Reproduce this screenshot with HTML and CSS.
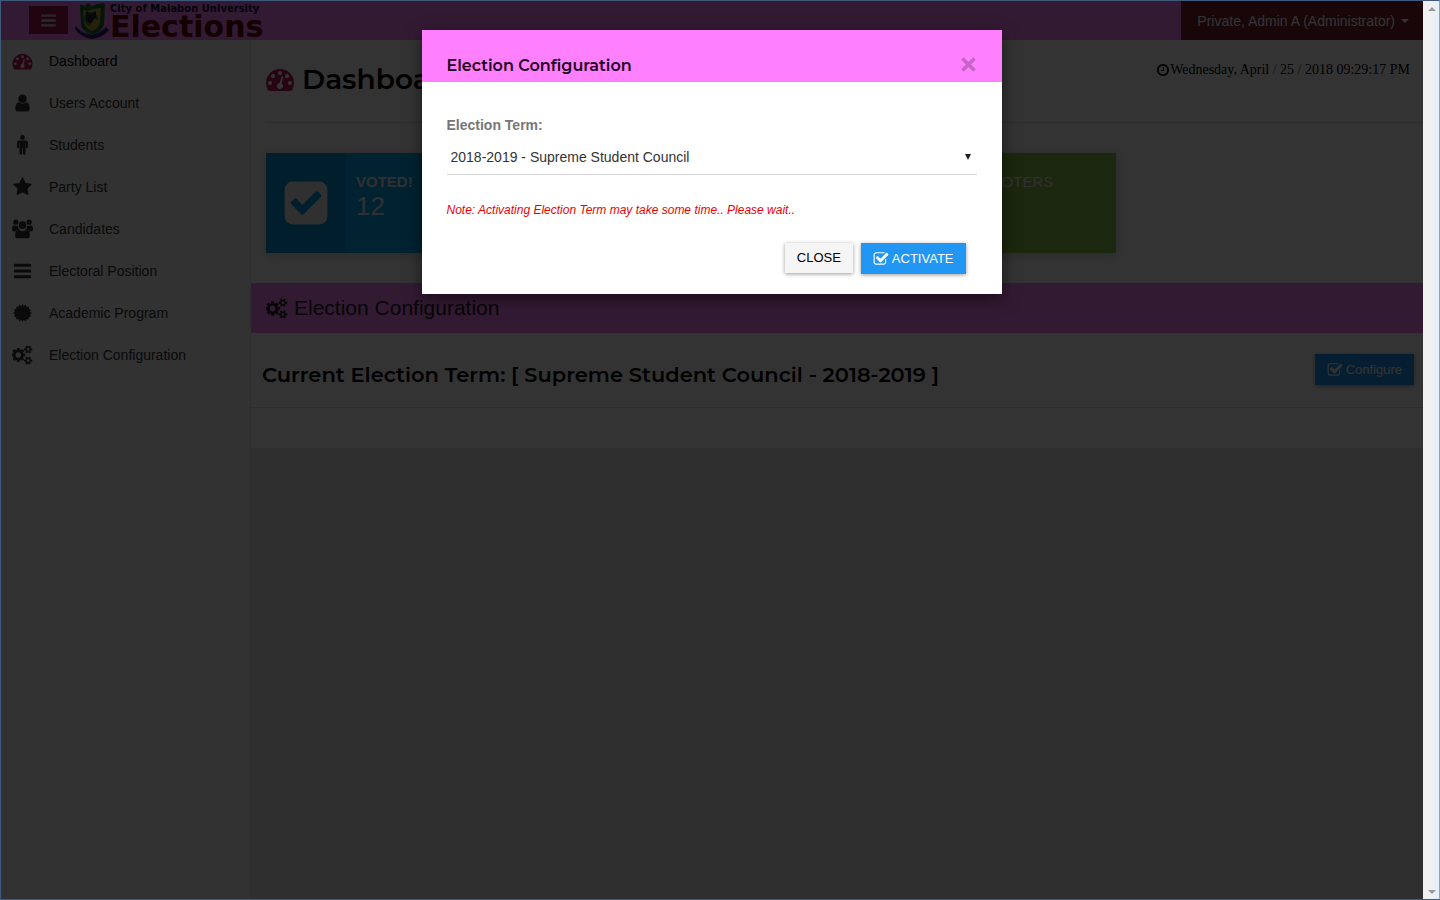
FILE: index.html
```html
<!DOCTYPE html>
<html lang="en">
<head>
<meta charset="utf-8">
<title>Elections - Dashboard</title>
<link rel="stylesheet" href="styles.css">
</head>
<body>
<svg class="sprite" aria-hidden="true">
  <symbol id="i-dash" viewBox="0 0 1792 1792"><path d="M384 1152q0-53-37.500-90.500t-90.500-37.500-90.500 37.500-37.500 90.500 37.500 90.500 90.500 37.500 90.500-37.500 37.500-90.500zm192-448q0-53-37.500-90.500t-90.500-37.500-90.500 37.500-37.500 90.500 37.500 90.500 90.500 37.500 90.500-37.500 37.500-90.500zm428 481l101-382q6-26-7.500-48.500t-38.500-29.500-48 6.500-30 39.500l-101 382q-60 5-107 43.500t-63 98.500q-20 77 20 146t117 89 146-20 89-117q16-60-6-117t-72-91zm660-33q0-53-37.500-90.500t-90.500-37.500-90.500 37.500-37.500 90.500 37.500 90.500 90.500 37.500 90.500-37.500 37.500-90.500zm-640-640q0-53-37.500-90.500t-90.500-37.500-90.500 37.500-37.500 90.500 37.500 90.500 90.500 37.500 90.500-37.500 37.500-90.500zm448 192q0-53-37.500-90.500t-90.500-37.500-90.500 37.500-37.500 90.500 37.500 90.500 90.500 37.500 90.500-37.500 37.500-90.500zm320 448q0 261-141 483-19 29-54 29h-1402q-35 0-54-29-141-221-141-483 0-182 71-348t191-286 286-191 348-71 348 71 286 191 191 286 71 348z"/></symbol>
  <symbol id="i-user" viewBox="0 0 1792 1792"><path d="M1536 1399q0 109-62.500 187t-150.500 78h-854q-88 0-150.500-78t-62.500-187q0-85 8.500-160.500t31.500-152 58.500-131 94-89 134.500-34.500q131 128 313 128t313-128q76 0 134.500 34.500t94 89 58.500 131 31.500 152 8.500 160.500zm-256-887q0 159-112.500 271.500t-271.500 112.500-271.500-112.500-112.500-271.500 112.500-271.500 271.500-112.500 271.500 112.500 112.500 271.500z"/></symbol>
  <symbol id="i-male" viewBox="0 0 20 20"><circle cx="10" cy="2.500" r="2.400"/><path d="M7 5.500h6q2.500 0 2.500 2.500v4.300q0 1-1 1t-1-1V8.500H13V18.500q0 1.300-1.300 1.300t-1.300-1.300V13h-.8v5.500q0 1.300-1.300 1.300T7 18.500V8.500h-.5v3.800q0 1-1 1t-1-1V8q0-2.500 2.500-2.500z"/></symbol>
  <symbol id="i-star" viewBox="0 0 1792 1792"><path d="M1728 647q0 22-26 48l-363 354 86 500q1 7 1 20 0 21-10.500 35.500t-30.500 14.500q-19 0-40-12l-449-236-449 236q-22 12-40 12-21 0-31.500-14.500t-10.500-35.500q0-6 2-20l86-500-364-354q-25-27-25-48 0-37 56-46l502-73 225-455q19-41 49-41t49 41l225 455 502 73q56 9 56 46z"/></symbol>
  <symbol id="i-users" viewBox="0 0 22 20"><circle cx="4" cy="2.800" r="2.700"/><circle cx="18" cy="2.800" r="2.700"/><circle cx="11" cy="6" r="4"/><path d="M2 6q2 1.300 4.200.3Q6 9 8 10.800H5Q4 11.800 3.800 12.500H2Q0 12.500 0 10.500 0 6.500 2 6zM20 6q-2 1.300-4.200.3Q16 9 14 10.800h3q1 1 1.200 1.700H20q2 0 2-2Q22 6.500 20 6zM7 10.500q4 3.500 8 0 3.700 0 3.700 6.200 0 3-3 3H6.300q-3 0-3-3Q3.300 10.500 7 10.500z"/></symbol>
  <symbol id="i-bars" viewBox="0 0 1792 1792"><path d="M1664 1344v128q0 26-19 45t-45 19h-1408q-26 0-45-19t-19-45v-128q0-26 19-45t45-19h1408q26 0 45 19t19 45zm0-512v128q0 26-19 45t-45 19h-1408q-26 0-45-19t-19-45v-128q0-26 19-45t45-19h1408q26 0 45 19t19 45zm0-512v128q0 26-19 45t-45 19h-1408q-26 0-45-19t-19-45v-128q0-26 19-45t45-19h1408q26 0 45 19t19 45z"/></symbol>
  <symbol id="i-cert" viewBox="0 0 20 20"><path d="M10 1l1.300 2L13.400 1.600l.6 2.400 2.300-.5-.1 2.400 2.300.5-1 2.100 2 1.500-2 1.500 1 2.100-2.300.5.1 2.400-2.300-.5-.6 2.400-2.100-1.400L10 19l-1.300-2-2.100 1.400L6 16l-2.300.5.1-2.400-2.300-.5 1-2.100-2-1.500 2-1.500-1-2.100 2.300-.5-.1-2.400L6 4l.6-2.400L8.700 3z"/></symbol>
  <symbol id="i-cogs" viewBox="0 0 1920 1792"><path d="M832 896q0-106-75-181t-181-75-181 75-75 181 75 181 181 75 181-75 75-181zm768 512q0-52-38-90t-90-38-90 38-38 90q0 53 37.500 90.500t90.500 37.500 90.500-37.500 37.500-90.500zm0-1024q0-52-38-90t-90-38-90 38-38 90q0 53 37.500 90.500t90.500 37.500 90.500-37.500 37.500-90.500zm-384 421v185q0 10-7 19.500t-16 10.500l-155 24q-11 35-32 76 34 48 90 115 7 11 7 20 0 12-7 19-23 30-82.500 89.500t-78.500 59.500q-11 0-21-7l-115-90q-37 19-77 31-11 108-23 155-7 24-30 24h-186q-11 0-20-7.500t-10-17.500l-23-153q-34-10-75-31l-118 89q-7 7-20 7-11 0-21-8-144-133-144-160 0-9 7-19 10-14 41-53t47-61q-23-44-35-82l-152-24q-10-1-17-9.500t-7-19.500v-185q0-10 7-19.500t16-10.500l155-24q11-35 32-76-34-48-90-115-7-11-7-20 0-12 7-20 22-30 82-89t79-59q11 0 21 7l115 90q34-18 77-32 11-108 23-154 7-24 30-24h186q11 0 20 7.500t10 17.500l23 153q34 10 75 31l118-89q8-7 20-7 11 0 21 8 144 133 144 160 0 8-7 19-12 16-42 54t-45 60q23 48 34 82l152 23q10 2 17 10.500t7 19.500zm640 533v140q0 16-149 31-12 27-30 52 51 113 51 138 0 4-4 7-122 71-124 71-8 0-46-47t-52-68q-20 2-30 2t-30-2q-14 21-52 68t-46 47q-2 0-124-71-4-3-4-7 0-25 51-138-18-25-30-52-149-15-149-31v-140q0-16 149-31 13-29 30-52-51-113-51-138 0-4 4-7 4-2 35-20t59-34 30-16q8 0 46 46.500t52 67.500q20-2 30-2t30 2q51-71 92-112l6-2q4 0 124 70 4 3 4 7 0 25-51 138 17 23 30 52 149 15 149 31zm0-1024v140q0 16-149 31-12 27-30 52 51 113 51 138 0 4-4 7-122 71-124 71-8 0-46-47t-52-68q-20 2-30 2t-30-2q-14 21-52 68t-46 47q-2 0-124-71-4-3-4-7 0-25 51-138-18-25-30-52-149-15-149-31v-140q0-16 149-31 13-29 30-52-51-113-51-138 0-4 4-7 4-2 35-20t59-34 30-16q8 0 46 46.500t52 67.500q20-2 30-2t30 2q51-71 92-112l6-2q4 0 124 70 4 3 4 7 0 25-51 138 17 23 30 52 149 15 149 31z"/></symbol>
  <symbol id="i-check" viewBox="0 0 1792 1792"><path d="M813 1299l614-614q19-19 19-45t-19-45l-102-102q-19-19-45-19t-45 19l-467 467-211-211q-19-19-45-19t-45 19l-102 102q-19 19-19 45t19 45l358 358q19 19 45 19t45-19zm851-883v960q0 119-84.500 203.500t-203.500 84.500h-960q-119 0-203.500-84.500t-84.500-203.500v-960q0-119 84.500-203.500t203.500-84.500h960q119 0 203.500 84.500t84.500 203.500z"/></symbol>
  <symbol id="i-checko" viewBox="0 0 1792 1792"><path d="M1472 930v318q0 119-84.500 203.500t-203.500 84.500h-832q-119 0-203.500-84.500t-84.500-203.500v-832q0-119 84.500-203.500t203.500-84.500h832q63 0 117 25 15 7 18 23 3 17-9 29l-49 49q-10 10-23 10-3 0-9-2-23-6-45-6h-832q-66 0-113 47t-47 113v832q0 66 47 113t113 47h832q66 0 113-47t47-113v-254q0-13 9-22l64-64q10-10 23-10 6 0 12 3 20 8 20 29zm231-489l-814 814q-24 24-57 24t-57-24l-430-430q-24-24-24-57t24-57l110-110q24-24 57-24t57 24l263 263 647-647q24-24 57-24t57 24l110 110q24 24 24 57t-24 57z"/></symbol>
  <symbol id="i-clock" viewBox="0 0 1792 1792"><path d="M1024 544v448q0 14-9 23t-23 9h-320q-14 0-23-9t-9-23v-64q0-14 9-23t23-9h224v-352q0-14 9-23t23-9h64q14 0 23 9t9 23zm416 352q0-148-73-273t-198-198-273-73-273 73-198 198-73 273 73 273 198 198 273 73 273-73 198-198 73-273zm224 0q0 209-103 385.500t-279.500 279.500-385.500 103-385.500-103-279.500-279.500-103-385.500 103-385.500 279.500-279.500 385.500-103 385.500 103 279.500 279.500 103 385.500z"/></symbol>
</svg>

<div class="window">
  <div class="app">
    <header class="navbar">
      <button class="menu-toggle" type="button" aria-label="Toggle menu"><svg class="icon-toggle"><use href="#i-bars"/></svg></button>
      <a class="brand" href="#">
        <svg class="seal" viewBox="0 0 34 38" aria-hidden="true">
          <path d="M5 3l5 2 3-3 4 3 5-2 7-1 1 2-1 20q-3 7-11 9-9-1-12-8z" fill="#1d6a35"/>
          <path d="M8 8l4 2 6-2 8-1-1 15q-2 6-8 8-6-2-8-8z" fill="#b8a838"/>
          <circle cx="16" cy="18" r="7" fill="#39783b"/>
          <path d="M11 10l5 3 5-3v8l-5 5-5-4z" fill="#1b2336"/>
          <path d="M20 17l4 3-5 7-4-3z" fill="#d29b28"/>
          <path d="M1 25q4 7 15 8 10-1 15-7l3 3q-5 7-17 9Q5 36 0 28z" fill="#25256d"/>
          <path d="M5 30q12 7 23-1" fill="none" stroke="#6c6c98"/>
        </svg>
        <span class="brand-text"><span class="brand-school">City of Malabon University</span><span class="brand-name">Elections</span></span>
      </a>
      <button class="account" type="button">Private, Admin A (Administrator)<span class="caret"></span></button>
    </header>
    <div class="columns">
      <nav class="sidebar">
        <a class="active" href="#"><svg class="icon-nav red"><use href="#i-dash"/></svg>Dashboard</a>
        <a href="#"><svg class="icon-nav"><use href="#i-user"/></svg>Users Account</a>
        <a href="#"><svg class="icon-nav"><use href="#i-male"/></svg>Students</a>
        <a href="#"><svg class="icon-nav"><use href="#i-star"/></svg>Party List</a>
        <a href="#"><svg class="icon-nav"><use href="#i-users"/></svg>Candidates</a>
        <a href="#"><svg class="icon-nav"><use href="#i-bars"/></svg>Electoral Position</a>
        <a href="#"><svg class="icon-nav"><use href="#i-cert"/></svg>Academic Program</a>
        <a href="#"><svg class="icon-nav"><use href="#i-cogs"/></svg>Election Configuration</a>
      </nav>
      <main class="main">
        <div class="content">
          <div class="page-head">
            <h1><svg class="icon-title red"><use href="#i-dash"/></svg>Dashboard</h1>
            <p class="clock"><svg class="icon-clock"><use href="#i-clock"/></svg>Wednesday, April <span class="slash">/</span> 25 <span class="slash">/</span> 2018 09:29:17 PM</p>
          </div>
          <div class="stats">
            <section class="stat blue">
              <div class="stat-icon"><svg class="icon-stat"><use href="#i-check"/></svg></div>
              <div class="stat-text"><strong>VOTED!</strong><span class="count">12</span></div>
            </section>
            <section class="stat green">
              <div class="stat-icon"></div>
              <div class="stat-text"><span>TOTAL VOTERS</span></div>
            </section>
          </div>
          <section class="panel">
            <h2><svg class="icon-panel"><use href="#i-cogs"/></svg>Election Configuration</h2>
            <div class="panel-body">
              <h3>Current Election Term: [ Supreme Student Council - 2018-2019 ]</h3>
              <button class="btn primary" type="button"><svg class="icon-btn"><use href="#i-checko"/></svg>Configure</button>
            </div>
          </section>
        </div>
      </main>
    </div>
    <div class="backdrop">
      <form class="modal" role="dialog" aria-labelledby="modal-title">
        <div class="modal-head">
          <h4 id="modal-title">Election Configuration</h4>
          <button class="close" type="button" aria-label="Close"><svg class="icon-close" viewBox="0 0 14 14"><path d="M2 2l10 10M12 2L2 12"/></svg></button>
        </div>
        <div class="modal-body">
          <label for="term">Election Term:</label>
          <div class="select-wrap">
            <select id="term"><option>2018-2019 - Supreme Student Council</option></select>
            <span class="arrow"></span>
          </div>
          <p class="note">Note: Activating Election Term may take some time.. Please wait..</p>
          <div class="actions">
            <button class="btn plain" type="button">CLOSE</button>
            <button class="btn primary" type="button"><svg class="icon-btn"><use href="#i-checko"/></svg>ACTIVATE</button>
          </div>
        </div>
      </form>
    </div>
  </div>
  <div class="scrollbar" aria-hidden="true"><span class="up"></span><span class="down"></span></div>
</div>
</body>
</html>
```
FILE: styles.css
```css
* { box-sizing: border-box; }
body {
  margin: 0;
  font: 14px/20px "Liberation Sans", Arial, sans-serif;
  color: #222;
}
h1, h2, h3, h4, p { margin: 0; }
a { color: inherit; text-decoration: none; }
button, select { font: inherit; border: 0; }
svg { fill: currentColor; flex: none; }
.sprite { position: absolute; width: 0; height: 0; }

.window { position: relative; display: flex; min-height: 100vh; }
.window::after {
  content: "";
  position: absolute;
  inset: 0;
  border: 1px solid #3f5a7d;
  border-right-color: #7ba6d4;
  pointer-events: none;
}
.app { position: relative; flex: 1; display: flex; flex-direction: column; }

.navbar {
  display: flex;
  align-items: center;
  height: 40px;
  padding-left: 29px;
  background: #ff80ff;
}
.menu-toggle {
  display: flex;
  align-items: center;
  justify-content: center;
  width: 39px;
  height: 28px;
  padding: 0;
  background: #a01850;
  color: #ccc;
}
.icon-toggle { width: 17px; height: 17px; }
.brand { display: flex; align-items: center; gap: 1px; margin-left: 7px; }
.seal { width: 34px; height: 38px; }
.brand-text {
  display: flex;
  flex-direction: column;
  padding-top: 4px;
  font-family: "DejaVu Sans", Verdana, sans-serif;
  font-weight: bold;
}
.brand-school { font-size: 10px; line-height: 10px; color: #101030; }
.brand-name { font-size: 30px; line-height: 26px; color: #600000; }
.account {
  display: flex;
  align-items: center;
  align-self: stretch;
  gap: 6px;
  margin-left: auto;
  padding: 2px 14px 0 16px;
  background: #782030;
  color: #fff;
}
.caret { border: 4px solid transparent; border-top-color: currentColor; border-bottom: 0; }

.columns { flex: 1; display: flex; }
.sidebar {
  width: 251px;
  background: #f8f8f8;
  border-right: 1px solid #e7e7e7;
}
.sidebar a {
  display: flex;
  align-items: center;
  gap: 16px;
  height: 42px;
  padding-left: 12px;
  color: #333;
}
.sidebar .active { color: #000; }
.icon-nav { width: 21px; height: 20px; }
.sidebar .red, .red { color: #c2185b; }

.main { flex: 1; background: #eaeaea; }
.content { background: #fff; padding-bottom: 40px; }
.page-head {
  display: flex;
  justify-content: space-between;
  height: 83px;
  margin-left: 15px;
  padding: 20px 13px 0 0;
  border-bottom: 1px solid #e0e0e0;
}
h1, h3, h4 { font-family: Montserrat, Inter, sans-serif; font-weight: 600; color: #000; }
h1 { display: flex; align-items: center; gap: 8px; height: 38px; font-size: 28px; line-height: 38px; }
.icon-title { width: 28px; height: 28px; }
.clock {
  display: flex;
  white-space: pre;
  height: 20px;
  font-family: "Liberation Serif", "Times New Roman", serif;
  color: #000;
  align-items: center;
}
.icon-clock { width: 14px; height: 14px; }
.slash { color: #777; }

.stats {
  display: grid;
  grid-template-columns: repeat(4, 1fr);
  gap: 28px;
  padding: 30px 15px;
}
.stat { display: flex; height: 100px; color: #eee; box-shadow: 0 2px 10px rgba(0, 0, 0, .2); }
.stat.blue { background: #03a9f4; }
.stat.green { grid-column: 3; background: #8bc34a; }
.stat-icon {
  display: flex;
  align-items: center;
  justify-content: center;
  width: 80px;
}
.blue .stat-icon { background: rgba(0, 0, 0, .12); }
.icon-stat { width: 50px; height: 50px; }
.stat-text { display: flex; flex-direction: column; padding: 19px 10px; font-size: 15px; }
.count { font-size: 26px; line-height: 28px; }

.panel { border-bottom: 1px solid #ddd; }
h2 {
  display: flex;
  align-items: center;
  gap: 6px;
  height: 50px;
  padding-left: 15px;
  background: #ff80ff;
  font-weight: 400;
  font-size: 21px;
}
.icon-panel { width: 22px; height: 21px; }
.panel-body {
  display: flex;
  align-items: flex-start;
  justify-content: space-between;
  height: 74px;
  padding: 21px 9px 0 11px;
}
h3 { font-size: 21px; line-height: 42px; }

.btn {
  display: flex;
  align-items: center;
  justify-content: center;
  gap: 3px;
  height: 31px;
  padding: 0 12px;
  font-size: 13px;
  box-shadow: 0 1px 4px rgba(0, 0, 0, .4);
}
.btn.primary { background: #2196f3; color: #fff; }
.btn.plain { height: 30px; background: #f5f5f5; color: #000; }
.icon-btn { width: 16px; height: 16px; }

.backdrop {
  position: absolute;
  inset: 0;
  display: flex;
  align-items: flex-start;
  justify-content: center;
  padding-top: 30px;
  background: rgba(0, 0, 0, .8);
}
.modal { width: 580px; background: #fff; box-shadow: 0 5px 15px rgba(0, 0, 0, .5); }
.modal-head {
  display: flex;
  justify-content: space-between;
  height: 52px;
  padding: 24px 25px 0;
  background: #ff80ff;
}
h4 { font-size: 16px; line-height: 24px; color: #200020; }
.close { display: flex; align-items: center; height: 20px; padding: 0; background: none; color: #c864c8; }
.icon-close { width: 17px; height: 17px; stroke: currentColor; stroke-width: 3; }
.modal-body { padding: 33px 25px 20px; }
label { display: block; font-weight: bold; color: #777; }
.select-wrap { position: relative; margin-top: 5px; border-bottom: 1px solid #d4d4d4; }
select {
  display: block;
  width: 100%;
  height: 34px;
  padding: 0 4px;
  appearance: none;
  background: none;
  color: #333;
}
.arrow {
  position: absolute;
  top: 14px;
  right: 6px;
  border: 3px solid transparent;
  border-top: 6px solid #222;
  border-bottom: 0;
  pointer-events: none;
}
.note { margin-top: 25px; font-size: 12px; font-style: italic; color: #e00; }
.actions { display: flex; gap: 8px; margin-top: 23px; padding-right: 11px; justify-content: flex-end; }

.scrollbar {
  display: flex;
  flex-direction: column;
  justify-content: space-between;
  align-items: center;
  width: 17px;
  padding: 7px 0 6px;
  background: linear-gradient(to right, #f0f0f0 11px, #e6f0fa 12px);
}
.up, .down { border: 4px solid transparent; }
.up { border-top: 0; border-bottom-color: #999; }
.down { border-bottom: 0; border-top-color: #999; }
```
